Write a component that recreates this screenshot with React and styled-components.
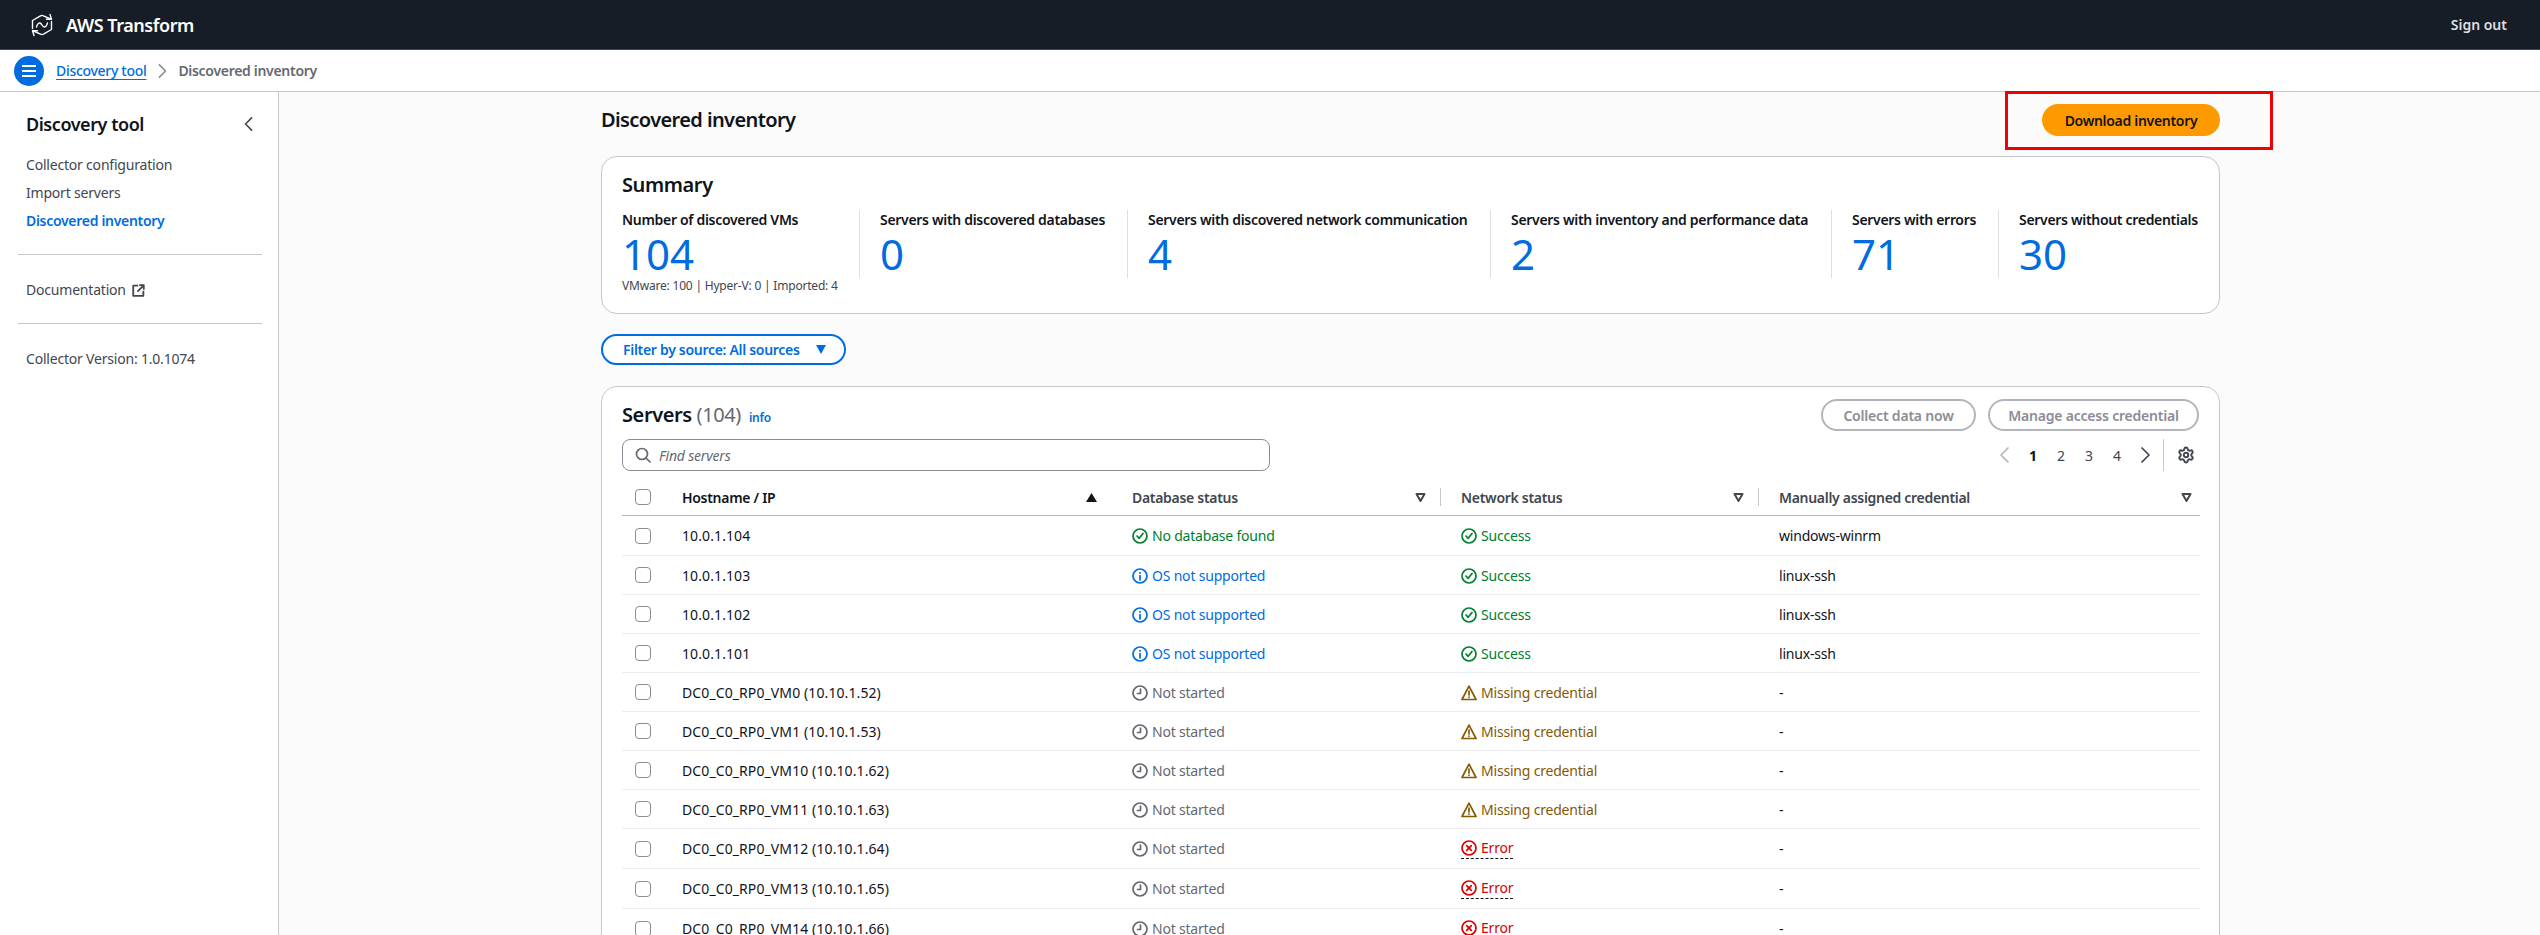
import React from "react";
import styled, { createGlobalStyle } from "styled-components";
import { Settings as Cog } from "lucide-react";

const FONT = `"Noto Sans", "Open Sans", sans-serif`;

const Global = createGlobalStyle`
    html, body {
        margin: 0;
        height: 935px;
        overflow: hidden;
        background: #fff;
        font-family: ${FONT};
        font-size: 14px;
        letter-spacing: -0.2px;
        color: #0f141a;
    }
    * { box-sizing: border-box; }
`;

const Page = styled.div`
    position: relative;
    width: 2540px;
    height: 935px;
    overflow: hidden;
`;

/* top bar */
const TopBar = styled.header`
    height: 50px;
    background: #161d26;
    border-bottom: 1px solid #424650;
    display: flex;
    align-items: center;
    justify-content: space-between;
    padding: 0 33px 0 31px;
`;
const Brand = styled.div`
    display: flex;
    align-items: center;
    gap: 13px;
    color: #fff;
    font-size: 18px;
    font-weight: 600;
    letter-spacing: -0.45px;
`;
const SignOut = styled.span`
    color: #dedee3;
    font-size: 14px;
    font-weight: 600;
    letter-spacing: 0;
`;

/* breadcrumbs */
const CrumbBar = styled.div`
    height: 42px;
    background: #fff;
    border-bottom: 1px solid #c6c6cd;
    display: flex;
    align-items: center;
    padding: 0 0 0 14px;
`;
const MenuButton = styled.span`
    width: 30px;
    height: 30px;
    border-radius: 50%;
    background: #006ce0;
    display: flex;
    align-items: center;
    justify-content: center;
    margin-right: 12px;
`;
const CrumbLink = styled.a`
    color: #006ce0;
    text-decoration: underline;
    text-underline-offset: 3px;
    font-weight: 500;
    letter-spacing: -0.3px;
`;
const CrumbCurrent = styled.span`
    color: #656871;
    font-weight: 600;
    letter-spacing: -0.3px;
`;
const CrumbSep = styled.span`
    display: flex;
    margin: 0 9px;
    color: #8c8c94;
`;

const Body = styled.div`
    display: flex;
    height: 843px;
`;

/* side navigation */
const Side = styled.nav`
    width: 279px;
    flex: none;
    background: #fff;
    border-right: 1px solid #c6c6cd;
    padding: 19px 16px 0 18px;
`;
const SideHead = styled.div`
    display: flex;
    align-items: center;
    justify-content: space-between;
    padding: 0 6px 0 8px;
    height: 26px;
    font-size: 18px;
    font-weight: 600;
    letter-spacing: -0.45px;
    color: #0f141a;
    svg { color: #424650; }
`;
const SideList = styled.ul`
    list-style: none;
    margin: 18px 0 0;
    padding: 0 0 0 8px;
    display: flex;
    flex-direction: column;
    gap: 8px;
`;
const SideItem = styled.li`
    line-height: 20px;
    color: ${p => (p.$active ? "#006ce0" : "#424650")};
    font-weight: ${p => (p.$active ? 600 : 400)};
    letter-spacing: ${p => (p.$active ? "-0.3px" : "-0.2px")};
`;
const SideRule = styled.hr`
    border: 0;
    border-top: 1px solid #c6c6cd;
    margin: 23px 0 0;
`;
const SideText = styled.div`
    display: flex;
    align-items: center;
    gap: 6px;
    margin: 25px 0 0;
    padding-left: 8px;
    line-height: 20px;
    color: #424650;
`;

/* main column */
const Main = styled.main`
    flex: 1;
    background: #fbfbfb;
    padding: 0 320px 0 322px;
    overflow: hidden;
`;
const TitleRow = styled.div`
    height: 64px;
    padding-top: 12px;
    display: flex;
    align-items: flex-start;
    justify-content: space-between;
`;
const PageTitle = styled.h1`
    margin: 0;
    line-height: 32px;
    font-size: 20px;
    font-weight: 600;
    letter-spacing: -0.6px;
`;
const Primary = styled.button`
    width: 178px;
    height: 32px;
    border: 0;
    border-radius: 16px;
    background: #ff9900;
    color: #0f141a;
    font: 600 14px ${FONT};
    letter-spacing: -0.3px;
`;
const Card = styled.section`
    background: #fff;
    border: 1px solid #c6c6cd;
    border-radius: 16px;
`;
const SummaryCard = styled(Card)`
    height: 158px;
    padding: 14px 20px 0;
`;
const CardTitle = styled.h2`
    margin: 0;
    font-size: 20px;
    line-height: 28px;
    font-weight: 600;
    letter-spacing: -0.4px;
`;
const Metrics = styled.div`
    display: grid;
    grid-template-columns: 237px 268px 363px 341px 167px auto;
    margin-top: 11px;
`;
const Metric = styled.div`
    height: 68px;
    padding-left: ${p => (p.$first ? 0 : "20px")};
    border-left: ${p => (p.$first ? "0" : "1px solid #dedee3")};
`;
const MetricLabel = styled.div`
    font-weight: 600;
    line-height: 20px;
    white-space: nowrap;
    letter-spacing: -0.31px;
`;
const MetricValue = styled.div`
    color: #006ce0;
    font-size: 42px;
    line-height: 48px;
    font-weight: 400;
    letter-spacing: 0;
`;
const MetricNote = styled.div`
    font-size: 12px;
    line-height: 16px;
    color: #424650;
    white-space: nowrap;
`;
const FilterButton = styled.button`
    display: flex;
    align-items: center;
    justify-content: space-between;
    width: 245px;
    height: 31px;
    margin: 20px 0 21px;
    padding: 0 18px 0 20px;
    background: #fff;
    border: 2px solid #006ce0;
    border-radius: 16px;
    color: #006ce0;
    font: 600 14px ${FONT};
    letter-spacing: -0.3px;
`;
const ServersCard = styled(Card)`
    padding: 12px 20px 0;
    border-radius: 16px 16px 0 0;
    height: 640px;
`;
const ToolRow = styled.div`
    display: flex;
    justify-content: space-between;
    align-items: center;
    height: 32px;
`;
const ServersTitle = styled.div`
    display: flex;
    align-items: baseline;
    gap: 8px;
`;
const Count = styled.span`
    font-weight: 400;
    color: #656871;
`;
const InfoLink = styled.a`
    color: #006ce0;
    font-size: 12px;
    font-weight: 600;
`;
const Actions = styled.div`
    display: flex;
    gap: 12px;
`;
const Disabled = styled.button`
    height: 32px;
    width: ${p => p.$w}px;
    background: #fff;
    border: 2px solid #b4b4bb;
    border-radius: 16px;
    color: #8c8c94;
    font: 600 14px ${FONT};
    letter-spacing: -0.2px;
`;
const FilterRow = styled.div`
    display: flex;
    align-items: center;
    justify-content: space-between;
    margin-top: 8px;
    height: 32px;
`;
const Search = styled.div`
    width: 648px;
    height: 32px;
    display: flex;
    align-items: center;
    gap: 8px;
    padding: 0 12px;
    border: 1px solid #8c8c94;
    border-radius: 8px;
    background: #fff;
    color: #656871;
    font-style: italic;
`;
const Pager = styled.div`
    display: flex;
    align-items: center;
    height: 32px;
    color: #424650;
`;
const PageCell = styled.span`
    width: 28px;
    text-align: center;
    display: flex;
    justify-content: center;
    font-weight: ${p => (p.$on ? 700 : 400)};
    color: ${p => (p.$on ? "#0f141a" : p.$off ? "#b4b4bb" : "#424650")};
`;
const Settings = styled.span`
    display: flex;
    height: 32px;
    align-items: center;
    margin-left: 4px;
    padding-left: 13px;
    padding-right: 4px;
    border-left: 1px solid #c6c6cd;
    color: #424650;
`;

/* table */
const Table = styled.table`
    width: 1578px;
    table-layout: fixed;
    border-collapse: separate;
    border-spacing: 0;
    margin-top: 9px;
`;
const Th = styled.th`
    position: relative;
    height: 36px;
    padding: 0 ${p => (p.$box ? 0 : "14px")} ${p => (p.$box ? "2px" : 0)} ${p => (p.$box ? "13px" : "21px")};
    border-bottom: 1px solid #b4b4bb;
    text-align: left;
    font-weight: 600;
    letter-spacing: -0.3px;
    color: ${p => (p.$sorted ? "#0f141a" : "#424650")};
    &:last-child { padding-right: 8px; }
    & + &::before {
        content: "";
        position: absolute;
        left: 0;
        top: 8px;
        height: 18px;
        border-left: 1px solid #c6c6cd;
    }
`;
const ThInner = styled.span`
    display: flex;
    align-items: center;
    justify-content: space-between;
`;
const Td = styled.td`
    height: ${p => (p.$tall ? 40 : 39)}px;
    padding: 0 0 0 ${p => (p.$box ? "13px" : "21px")};
    border-bottom: 1px solid #ebebf0;
    white-space: nowrap;
`;
const HostCell = styled(Td)`
    letter-spacing: 0.1px;
`;
const Check = styled.span`
    display: block;
    width: 16px;
    height: 16px;
    border: 1px solid #8c8c94;
    border-radius: 4px;
    background: #fff;
`;
const Status = styled.span`
    display: inline-flex;
    align-items: center;
    gap: 4px;
    line-height: 20px;
    vertical-align: middle;
    color: ${p => p.$color};
    ${p => p.$dashed && "border-bottom: 1px dashed #0f141a; height: 21px;"}
`;

/* annotation drawn over the screenshot */
const RedBox = styled.div`
    position: absolute;
    left: 2005px;
    top: 91px;
    width: 268px;
    height: 59px;
    border: 3px solid #f00000;
    pointer-events: none;
`;

const LogoHalf = () => (
    <>
        <path d="M1.500 15.500V7.500L9.500 2.800Q11 2 12.500 2.800L19.500 6" />
        <path d="M15.500 6.200H20.500L19 1.500" />
    </>
);
const Logo = () => (
    <svg width="22" height="24" viewBox="0 0 22 24" fill="none" stroke="#fff" strokeWidth="1.4" strokeLinejoin="round" strokeLinecap="round">
        <LogoHalf />
        <g transform="rotate(180 11 12)"><LogoHalf /></g>
        <path d="M5.500 14C6.500 10 9 8.500 11 12C13 15.500 15.500 14 16.500 10" />
    </svg>
);

const Stroke = ({ size = 16, width = 2, children }) => (
    <svg width={size} height={size} viewBox="0 0 16 16" fill="none" stroke="currentColor" strokeWidth={width} strokeLinecap="round" strokeLinejoin="round" style={{ flex: "none" }}>
        {children}
    </svg>
);

const Burger = () => (
    <svg width="16" height="16" viewBox="0 0 16 16" fill="none" stroke="#fff" strokeWidth="2">
        <path d="M1 3h14M1 8h14M1 13h14" />
    </svg>
);
const ChevronRight = ({ size = 16, width = 1.700 }) => <Stroke size={size} width={width}><path d="m5 1 7 7-7 7" /></Stroke>;
const ChevronLeft = ({ size = 16, width = 1.700 }) => <Stroke size={size} width={width}><path d="m11 1-7 7 7 7" /></Stroke>;
const External = () => (
    <Stroke size={13} width={2.200}>
        <path d="M6.500 2H1.500v12.500H14V9.500" strokeLinecap="square" />
        <path d="M10 1.500h4.500V6M14 2 7.500 8.500" strokeLinecap="square" />
    </Stroke>
);
const SearchIcon = () => (
    <Stroke width={1.700}>
        <circle cx="7" cy="7" r="5.500" />
        <path d="m11 11 4 4" />
    </Stroke>
);
const Caret = ({ size = 10 }) => (
    <svg width={size} height={size * 0.9} viewBox="0 0 10 9" fill="currentColor"><path d="M0 0h10L5 9z" /></svg>
);
const SortUp = () => (
    <svg width="11" height="9" viewBox="0 0 11 9" fill="currentColor"><path d="M5.500 0 11 9H0z" /></svg>
);
const FilterIcon = () => (
    <svg width="11" height="9" viewBox="0 0 11 9" fill="none" stroke="#424650" strokeWidth="2" strokeLinejoin="round"><path d="M1.500 1h8L5.500 8z" /></svg>
);
const IconOk = () => (
    <Stroke width={1.700}><circle cx="8" cy="8" r="7" /><path d="m5 8 2.200 2.300L11 5.500" /></Stroke>
);
const IconInfo = () => (
    <Stroke width={1.700}><circle cx="8" cy="8" r="7" /><path d="M8 7.500V12M8 4.500v.6" /></Stroke>
);
const IconClock = () => (
    <Stroke width={1.700}><circle cx="8" cy="8" r="7" /><path d="M8.500 4v4.500H5.500" /></Stroke>
);
const IconWarn = () => (
    <Stroke width={1.700}><path d="M8 1.200 15 14.500H1z" /><path d="M8 6v4M8 12v.3" /></Stroke>
);
const IconError = () => (
    <Stroke width={1.700}><circle cx="8" cy="8" r="7" /><path d="m5.700 5.700 4.600 4.600M10.300 5.700l-4.600 4.600" /></Stroke>
);

const KINDS = {
    ok: { color: "#00802f", icon: <IconOk /> },
    info: { color: "#006ce0", icon: <IconInfo /> },
    idle: { color: "#656871", icon: <IconClock /> },
    warn: { color: "#855900", icon: <IconWarn /> },
    err: { color: "#db0000", icon: <IconError /> },
};

const StatusCell = ({ kind, children }) => (
    <Status $color={KINDS[kind].color} $dashed={kind === "err"}>
        {KINDS[kind].icon}
        {children}
    </Status>
);

const metrics = [
    { label: "Number of discovered VMs", value: "104", note: "VMware: 100 | Hyper-V: 0 | Imported: 4" },
    { label: "Servers with discovered databases", value: "0" },
    { label: "Servers with discovered network communication", value: "4" },
    { label: "Servers with inventory and performance data", value: "2" },
    { label: "Servers with errors", value: "71" },
    { label: "Servers without credentials", value: "30" },
];

const rows = [
    ["10.0.1.104", "ok", "No database found", "ok", "Success", "windows-winrm"],
    ["10.0.1.103", "info", "OS not supported", "ok", "Success", "linux-ssh"],
    ["10.0.1.102", "info", "OS not supported", "ok", "Success", "linux-ssh"],
    ["10.0.1.101", "info", "OS not supported", "ok", "Success", "linux-ssh"],
    ["DC0_C0_RP0_VM0 (10.10.1.52)", "idle", "Not started", "warn", "Missing credential", "-"],
    ["DC0_C0_RP0_VM1 (10.10.1.53)", "idle", "Not started", "warn", "Missing credential", "-"],
    ["DC0_C0_RP0_VM10 (10.10.1.62)", "idle", "Not started", "warn", "Missing credential", "-"],
    ["DC0_C0_RP0_VM11 (10.10.1.63)", "idle", "Not started", "warn", "Missing credential", "-"],
    ["DC0_C0_RP0_VM12 (10.10.1.64)", "idle", "Not started", "err", "Error", "-"],
    ["DC0_C0_RP0_VM13 (10.10.1.65)", "idle", "Not started", "err", "Error", "-"],
    ["DC0_C0_RP0_VM14 (10.10.1.66)", "idle", "Not started", "err", "Error", "-"],
];

export default function App() {
    return (
        <Page>
            <Global />
            <TopBar>
                <Brand><Logo />AWS Transform</Brand>
                <SignOut>Sign out</SignOut>
            </TopBar>
            <CrumbBar>
                <MenuButton><Burger /></MenuButton>
                <CrumbLink>Discovery tool</CrumbLink>
                <CrumbSep><ChevronRight size={14} width={1.800} /></CrumbSep>
                <CrumbCurrent>Discovered inventory</CrumbCurrent>
            </CrumbBar>
            <Body>
                <Side>
                    <SideHead>
                        Discovery tool
                        <ChevronLeft size={14} width={1.800} />
                    </SideHead>
                    <SideList>
                        <SideItem>Collector configuration</SideItem>
                        <SideItem>Import servers</SideItem>
                        <SideItem $active>Discovered inventory</SideItem>
                    </SideList>
                    <SideRule />
                    <SideText>Documentation <External /></SideText>
                    <SideRule />
                    <SideText>Collector Version: 1.0.1074</SideText>
                </Side>
                <Main>
                    <TitleRow>
                        <PageTitle>Discovered inventory</PageTitle>
                        <Primary>Download inventory</Primary>
                    </TitleRow>
                    <SummaryCard>
                        <CardTitle>Summary</CardTitle>
                        <Metrics>
                            {metrics.map((m, i) => (
                                <Metric key={m.label} $first={i === 0}>
                                    <MetricLabel>{m.label}</MetricLabel>
                                    <MetricValue>{m.value}</MetricValue>
                                    {m.note && <MetricNote>{m.note}</MetricNote>}
                                </Metric>
                            ))}
                        </Metrics>
                    </SummaryCard>
                    <FilterButton>Filter by source: All sources <Caret /></FilterButton>
                    <ServersCard>
                        <ToolRow>
                            <ServersTitle>
                                <CardTitle>Servers <Count>(104)</Count></CardTitle>
                                <InfoLink>info</InfoLink>
                            </ServersTitle>
                            <Actions>
                                <Disabled $w={155}>Collect data now</Disabled>
                                <Disabled $w={211}>Manage access credential</Disabled>
                            </Actions>
                        </ToolRow>
                        <FilterRow>
                            <Search><SearchIcon />Find servers</Search>
                            <Pager>
                                <PageCell $off><ChevronLeft /></PageCell>
                                <PageCell $on>1</PageCell>
                                <PageCell>2</PageCell>
                                <PageCell>3</PageCell>
                                <PageCell>4</PageCell>
                                <PageCell><ChevronRight /></PageCell>
                                <Settings><Cog size={18} strokeWidth={2.600} /></Settings>
                            </Pager>
                        </FilterRow>
                        <Table>
                            <colgroup>
                                <col width="39" />
                                <col width="450" />
                                <col width="329" />
                                <col width="318" />
                                <col />
                            </colgroup>
                            <thead>
                                <tr>
                                    <Th $box><Check /></Th>
                                    <Th $sorted><ThInner>Hostname / IP <SortUp /></ThInner></Th>
                                    <Th><ThInner>Database status <FilterIcon /></ThInner></Th>
                                    <Th><ThInner>Network status <FilterIcon /></ThInner></Th>
                                    <Th><ThInner>Manually assigned credential <FilterIcon /></ThInner></Th>
                                </tr>
                            </thead>
                            <tbody>
                                {rows.map((r, i) => (
                                    <tr key={r[0]}>
                                        <Td $box $tall={i === 0 || r[3] === "err"}><Check /></Td>
                                        <HostCell>{r[0]}</HostCell>
                                        <Td><StatusCell kind={r[1]}>{r[2]}</StatusCell></Td>
                                        <Td><StatusCell kind={r[3]}>{r[4]}</StatusCell></Td>
                                        <Td>{r[5]}</Td>
                                    </tr>
                                ))}
                            </tbody>
                        </Table>
                    </ServersCard>
                </Main>
            </Body>
            <RedBox />
        </Page>
    );
}
